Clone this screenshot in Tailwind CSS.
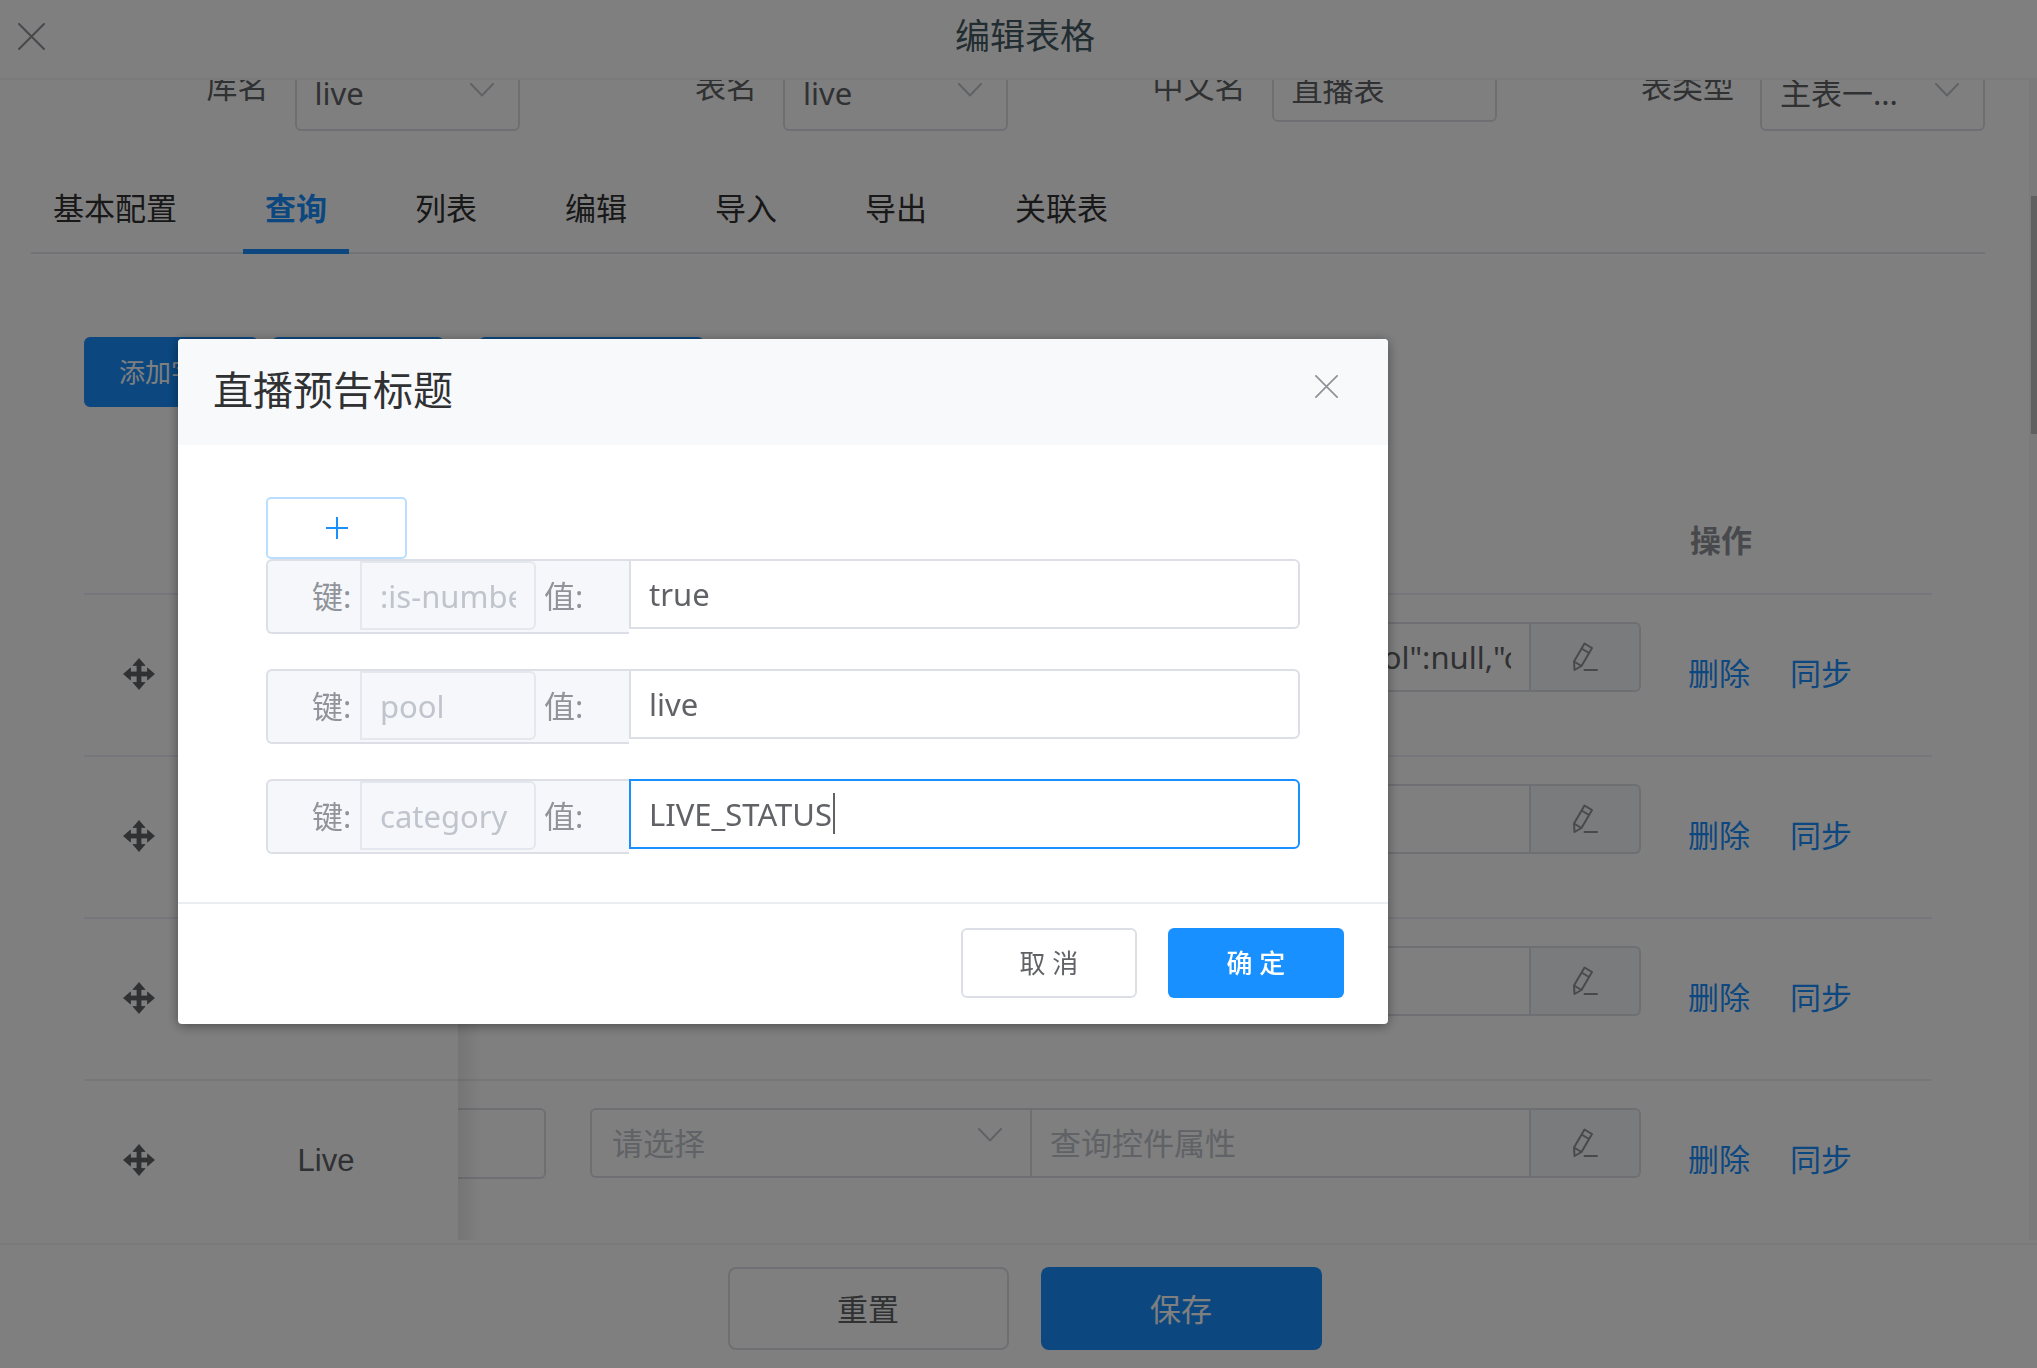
<!DOCTYPE html>
<html lang="zh-CN">
<head>
<meta charset="utf-8">
<title>编辑表格</title>
<script src="https://cdn.jsdelivr.net/npm/@tailwindcss/browser@4"></script>
</head>
<body class="h-screen overflow-hidden bg-white font-['Noto_Sans','Noto_Sans_CJK_SC',sans-serif] text-[31px] leading-[40px] text-[#606266]">
<svg class="hidden">
  <symbol id="close" viewBox="0 0 26 26"><path d="M1 1 25 25M25 1 1 25" fill="none" stroke="currentColor" stroke-width="2" stroke-linecap="round"/></symbol>
  <symbol id="chevron" viewBox="0 0 24 14"><path d="M1 1 12 12.500 23 1" fill="none" stroke="currentColor" stroke-width="2" stroke-linecap="round" stroke-linejoin="round"/></symbol>
  <symbol id="move" viewBox="0 0 32 32"><path d="M16 0.500 22 7.500H18V14H24.500V10L31.500 16 24.500 22V18H18V24.500H22L16 31.500 10 24.500H14V18H7.500V22L0.500 16 7.500 10V14H14V7.500H10Z" fill="currentColor" stroke="currentColor" stroke-width="0.800"/></symbol>
  <symbol id="pencil" viewBox="0 0 26 30"><path d="M12.500 1.500 20 6 9.500 24 2.500 28 2 19.500ZM9.500 6.500 17 11M2 19.500 9.500 24" fill="none" stroke="currentColor" stroke-width="2" stroke-linejoin="round"/><path d="M12.500 28H25" stroke="currentColor" stroke-width="2" stroke-linecap="round"/></symbol>
</svg>

<div class="flex h-full flex-col">
  <header class="flex h-20 shrink-0 items-center border-b-2 border-[#f4f4f4] pb-1.5">
    <button type="button" aria-label="关闭" class="ml-[18px] text-[#909399]"><svg class="size-[27px]"><use href="#close"/></svg></button>
    <h1 class="flex-1 pr-8 text-center text-[35px] text-[#455a64]">编辑表格</h1>
  </header>

  <div class="flex min-h-0 flex-1">
    <main class="min-w-0 flex-1 overflow-hidden pr-11 pl-[31px]">
      <form class="-mt-7 grid grid-cols-4 items-start">
        <div class="flex items-start">
          <label for="db" class="h-[70px] flex-1 pr-[26px] text-right leading-[68px]">库名</label>
          <div class="relative mt-[3px] w-[225px]">
            <select id="db" class="h-[76px] w-full appearance-none rounded-md border-2 border-[#dcdfe6] bg-white pl-[18px]"><option>live</option></select>
            <svg class="pointer-events-none absolute top-7 right-[26px] h-[14px] w-6 text-[#c0c4cc]"><use href="#chevron"/></svg>
          </div>
        </div>
        <div class="flex items-start">
          <label for="tb" class="h-[70px] flex-1 pr-[26px] text-right leading-[68px]">表名</label>
          <div class="relative mt-[3px] w-[225px]">
            <select id="tb" class="h-[76px] w-full appearance-none rounded-md border-2 border-[#dcdfe6] bg-white pl-[18px]"><option>live</option></select>
            <svg class="pointer-events-none absolute top-7 right-[26px] h-[14px] w-6 text-[#c0c4cc]"><use href="#chevron"/></svg>
          </div>
        </div>
        <div class="flex items-start">
          <label for="cn" class="h-[70px] flex-1 pr-[26px] text-right leading-[68px]">中文名</label>
          <input id="cn" value="直播表" class="h-[70px] w-[225px] rounded-md border-2 border-[#dcdfe6] bg-white px-[18px]">
        </div>
        <div class="flex items-start">
          <label for="kind" class="h-[70px] flex-1 pr-[26px] text-right leading-[68px]">表类型</label>
          <div class="relative mt-[3px] w-[225px]">
            <select id="kind" class="h-[76px] w-full appearance-none rounded-md border-2 border-[#dcdfe6] bg-white pl-[18px]"><option>主表一...</option></select>
            <svg class="pointer-events-none absolute top-7 right-[26px] h-[14px] w-6 text-[#c0c4cc]"><use href="#chevron"/></svg>
          </div>
        </div>
      </form>

      <nav class="mt-[33px] flex h-[90px] gap-11 border-b-2 border-[#e4e7ed] leading-[88px] text-[#303133]">
        <a href="#" class="px-[22px]">基本配置</a>
        <a href="#" class="h-[90px] border-b-[5px] border-[#1890ff] px-[22px] font-bold text-[#1890ff]">查询</a>
        <a href="#" class="px-[22px]">列表</a>
        <a href="#" class="px-[22px]">编辑</a>
        <a href="#" class="px-[22px]">导入</a>
        <a href="#" class="px-[22px]">导出</a>
        <a href="#" class="px-[22px]">关联表</a>
      </nav>

      <section class="px-[53px] pt-[83px]">
        <div class="flex h-[70px]">
          <button type="button" class="w-[174px] rounded-md bg-[#1890ff] text-[26px] text-white">添加字段</button>
          <button type="button" class="ml-[14px] w-[172px] rounded-md bg-[#1890ff]"></button>
          <button type="button" class="ml-[35px] w-[225px] rounded-md bg-[#1890ff]"></button>
        </div>
        <table class="mt-[82px] w-full table-fixed border-separate border-spacing-0">
          <colgroup><col class="w-[110px]"><col class="w-[264px]"><col class="w-[110px]"><col><col class="w-[266px]"></colgroup>
          <thead>
            <tr class="h-[106px] text-left text-[#909399]">
              <th class="border-b-2 border-[#ebeef5]"></th><th class="border-b-2 border-[#ebeef5]"></th><th class="border-b-2 border-[#ebeef5]"></th><th class="border-b-2 border-[#ebeef5]"></th>
              <th class="border-b-2 border-[#ebeef5] pb-0.5 pl-6 font-bold">操作</th>
            </tr>
          </thead>
          <tbody id="rows"></tbody>
        </table>
      </section>
    </main>
    <div class="w-2 shrink-0 bg-[#f4f4f4] pt-[116px] pl-0.5"><div class="h-[238px] bg-[#c1c1c1]"></div></div>
  </div>

  <footer class="mt-[3px] flex h-[125px] shrink-0 justify-center gap-8 border-t-2 border-[#f4f4f4] pt-[22px] pl-3">
    <button type="button" class="h-[83px] w-[281px] rounded-lg border-2 border-[#dcdfe6] bg-white">重置</button>
    <button type="button" class="h-[83px] w-[281px] rounded-lg bg-[#1890ff] text-white">保存</button>
  </footer>
</div>

<div class="fixed inset-0 z-20 bg-black/50 pt-[339px] pl-[178px]">
  <div role="dialog" aria-labelledby="dlg" class="w-[1210px] max-w-full overflow-hidden rounded bg-white shadow-[0_2px_12px_rgba(0,0,0,0.4)]">
    <div class="flex h-[106px] items-center justify-between bg-[#f8f9fb] pr-[50px] pb-1 pl-[35px]">
      <h2 id="dlg" class="text-[40px] text-[#303133]">直播预告标题</h2>
      <button type="button" aria-label="关闭" class="mb-2 text-[#909399]"><svg class="size-[23px]"><use href="#close"/></svg></button>
    </div>
    <div class="px-[88px] pt-[52px] pb-12">
      <button type="button" aria-label="添加" class="flex h-[62px] w-[141px] items-center justify-center rounded-[5px] border-2 border-[#badeff] text-[#1890ff]">
        <svg class="size-[22px]" viewBox="0 0 22 22"><path d="M11 0V22M0 11H22" stroke="currentColor" stroke-width="2"/></svg>
      </button>
      <div id="pairs" class="flex flex-col gap-[35px]"></div>
    </div>
    <div class="flex h-[122px] justify-end gap-[31px] border-t-2 border-[#ebeef0] pt-6 pr-11 text-[26px]">
      <button type="button" class="h-[70px] w-[176px] rounded-md border-2 border-[#dcdfe6]">取 消</button>
      <button type="button" class="h-[70px] w-[176px] rounded-md bg-[#1890ff] font-medium text-white">确 定</button>
    </div>
  </div>
</div>

<script>
const rows = [
  { name: '', value: '{":is-number": null, "pool":null,"category":null}' },
  { name: '', value: '' },
  { name: '', value: '' },
  { name: 'Live', value: '' },
];
document.getElementById('rows').innerHTML = rows.map(r => `
  <tr class="h-[162px]">
    <td class="border-b-2 border-[#ebeef5] pb-0.5"><svg class="mx-auto size-8 text-[#606266]"><use href="#move"/></svg></td>
    <td class="relative border-b-2 border-[#ebeef5] text-center font-['Liberation_Sans',sans-serif]">${r.name}<span class="absolute top-0 left-full z-10 h-[162px] w-6 bg-linear-to-r from-black/8 to-transparent"></span></td>
    <td class="border-b-2 border-[#ebeef5]"><input aria-label="标题" class="mb-9 block h-[71px] w-[88px] rounded-r-md border-2 border-l-0 border-[#dcdfe6]"></td>
    <td class="border-b-2 border-[#ebeef5] pr-[25px] pl-[22px]">
      <div class="mb-9 flex h-[70px]">
        <div class="relative w-[440px]">
          <select aria-label="查询控件" class="h-full w-full appearance-none rounded-l-md border-2 border-r-0 border-[#dcdfe6] pl-5 text-[#c0c4cc]"><option>请选择</option></select>
          <svg class="pointer-events-none absolute top-5 right-7 h-[14px] w-6 text-[#c0c4cc]"><use href="#chevron"/></svg>
        </div>
        <input aria-label="查询控件属性" placeholder="查询控件属性" value='${r.value}' class="min-w-0 flex-1 border-2 border-[#dcdfe6] px-[18px] placeholder:text-[#c0c4cc]">
        <button type="button" aria-label="编辑属性" class="flex w-[110px] items-center justify-center rounded-r-md border-2 border-l-0 border-[#dcdfe6] bg-[#f5f7fa] text-[#909399]"><svg class="h-[30px] w-[26px]"><use href="#pencil"/></svg></button>
      </div>
    </td>
    <td class="border-b-2 border-[#ebeef5] pb-1 pl-[22px] text-[#1890ff]"><a href="#" class="mr-10">删除</a><a href="#">同步</a></td>
  </tr>`).join('');

const pairs = [[':is-number', 'true'], ['pool', 'live'], ['category', 'LIVE_STATUS']];
document.getElementById('pairs').innerHTML = pairs.map(([k, v], i) => `
  <div class="flex h-[75px] items-start">
    <div class="flex h-[75px] w-[363px] items-center rounded-l-md border-2 border-r-0 border-[#dcdfe6] bg-[#f5f7fa] pb-0.5 pl-11 text-[#909399]">
      <label for="k${i}" class="w-12">键:</label>
      <input id="k${i}" disabled value="${k}" class="h-[69px] w-[176px] rounded-r-md border-2 border-[#e4e7ed] px-[18px] text-[#c0c4cc]">
      <label for="v${i}" class="ml-2">值:</label>
    </div>
    <div class="relative flex-1">
      <input id="v${i}" value="${v}" class="h-[70px] w-full rounded-r-md border-2 px-[18px] ${i === 2 ? 'border-[#1890ff]' : 'border-[#dcdfe6]'}">
      ${i === 2 ? '<span class="absolute top-[14px] left-[204px] h-[41px] w-0.5 bg-[#606266]"></span>' : ''}
    </div>
  </div>`).join('');
</script>
</body>
</html>
